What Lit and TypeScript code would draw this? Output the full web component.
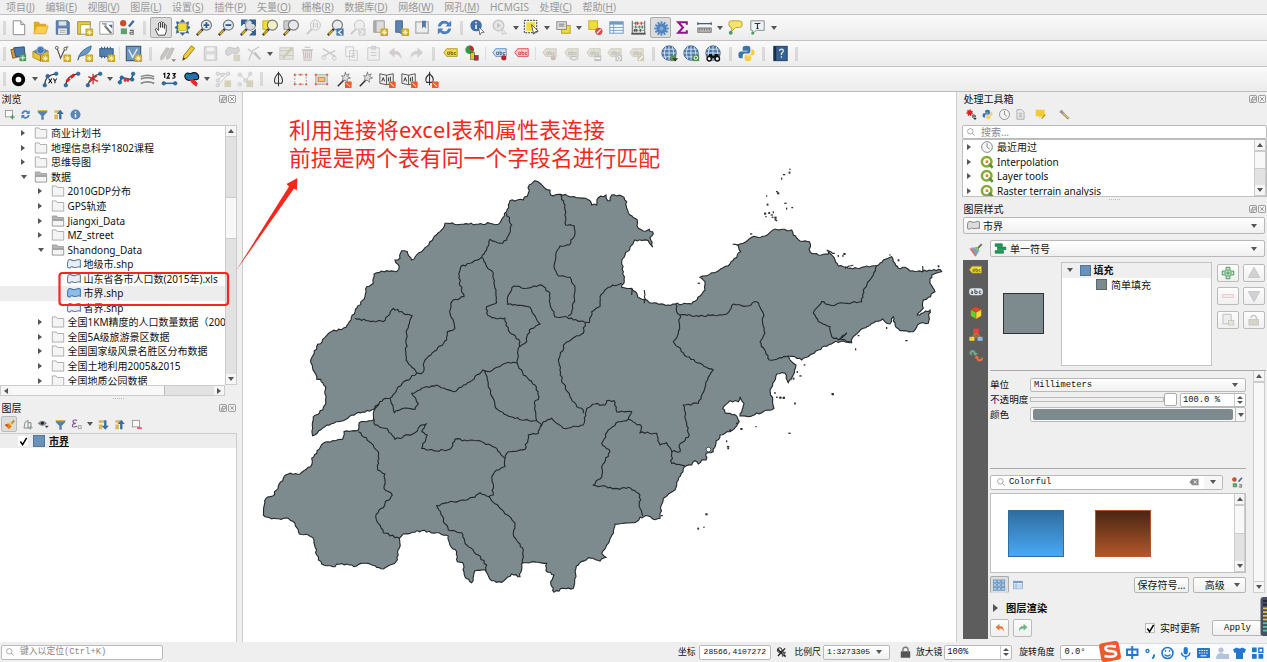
import { LitElement, html, svg, css, nothing } from "lit";
import { customElement, property } from "lit/decorators.js";
import { classMap } from "lit/directives/class-map.js";

// ---------- shared icon fragments (22x22 grid) ----------
const star = svg`<rect x="12" y="12" width="8" height="8" rx="1" fill="#c9a820"/><path d="M16 13v6M13 16h6M14 14l4 4M18 14l-4 4" stroke="#fff6c0" stroke-width="1"/>`;
const orange = svg`<rect x="12.5" y="13" width="7" height="7" rx="1" fill="#f05a28"/><path d="M14 15l4 3.500" stroke="#fff" stroke-width="1"/>`;
const lens = (c: string, fill = "#e6eaec") => svg`<path d="M9.500 12.500L3 19" stroke="#333" stroke-width="2.600"/><path d="M8 14L4 18" stroke="#e3b81c" stroke-width="1.600"/><circle cx="13" cy="8.500" r="5.300" fill="${fill}" stroke="${c}" stroke-width="1.200"/>`;
const greyLens = svg`<path d="M9.500 12.500L4 18" stroke="#c8c8c8" stroke-width="2"/><circle cx="13" cy="8.500" r="5.300" fill="#eee" stroke="#c4c4c4"/>`;
const dots = (pts: number[][], c = "#2b6fa8") => pts.map(([x, y]) => svg`<circle cx=${x} cy=${y} r="1.900" fill=${c} stroke=${c === "#ddd" ? "#bbb" : "#174a78"} stroke-width=".5"/>`);
const tag = (fill: string, line: string, txt: string) => svg`<path d="M4 10l3-4h11v8H7z" fill=${fill} stroke=${line} stroke-width=".9"/><path d="M8 12v-2.500h2V12zM11.500 8v4h2v-2h-2M16.800 10h-1.800v2h1.800" fill="none" stroke=${txt} stroke-width=".7"/>`;
const globe = svg`<circle cx="10.500" cy="10.500" r="7.500" fill="#4a7aae" stroke="#3a5f8a"/><path d="M3 10.500h15M4.500 6.500h12M4.500 14.500h12M10.500 3v15M7 4q-3 6.500 0 13M14 4q3 6.500 0 13" stroke="#d5e3f0" fill="none" stroke-width="1"/>`;
const wand = svg`<path d="M5 18l7-7" stroke="#333" stroke-width="1.600"/><path d="M13 3l.8 3.400L17 5l-1.600 3 3 1.400-3.400 1L15 14l-2.500-2.500-3 .8 1.200-2.800L9 7l3 .3z" fill="#ddd" stroke="#666" stroke-width=".7"/>`;
const bookA = svg`<path d="M3 5l7 1.500L17 5v10l-7 1.500L3 15zM10 6.500v10" fill="#eee" stroke="#444" stroke-width=".9"/><path d="M5 13l1.500-4L8 13M12 9v4M14 8v5" stroke="#333" fill="none"/>`;
const redo = (c: string) => svg`<path d="M5 16q-1-8 7-8V4.500l6 5.500-6 5.500V12q-5-.5-7 4z" fill=${c}/>`;
const undo = (c: string) => svg`<path d="M17 17q1-9-7-9V4.500L4 10l6 5.500V12q5-.5 7 5z" fill=${c}/>`;
const refresh = svg`<path d="M4 10q1-6 7-6 3 0 4.500 2L18 4v6h-6l2-2q-5-3-7 2zM18 12q-1 6-7 6-3 0-4.500-2L4 18v-6h6l-2 2q5 3 7-2z" fill="#4b80bd"/>`;
const cubes = svg`<path d="M11 2l7.500 4v9L11 19.500 3.500 15V6z" fill="#e8432e"/><path d="M3.500 6L11 10v9.500L3.500 15z" fill="#5fd032"/><path d="M18.500 6L11 10v9.500l7.500-4.500z" fill="#f2dc3a"/><path d="M11 2l7.500 4v9L11 19.500 3.500 15V6zM3.500 6L11 10l7.500-4M11 10v9.500" stroke="#7a3b16" stroke-width=".6" fill="none"/>`;
const python = svg`<path d="M11 3q-4 0-4 2.500V8h5v1H5q-2.500 0-2.500 3.500T5 16h2v-3q0-2 2-2h4q2 0 2-2V5.500Q15 3 11 3z" fill="#3b75a8"/><path d="M12 19q4 0 4-2.500V14h-5v-1h6q2.500 0 2.500-3T17 6.500h-1V10q0 2-2 2h-3q-2 0-2 2v2.500Q9 19 12 19z" fill="#f6cf45"/>`;
const swatch = svg`<circle cx="6.500" cy="6.500" r="3.300" fill="#c3502c"/><rect x="4" y="12" width="6.500" height="6" fill="#62a06c"/><path d="M12.500 10L17.500 4" stroke="#3b6ca5" stroke-width="2.400"/><path d="M13.500 14h3.500v4h-3q-1-1.500 0-2h3" fill="none" stroke="#666" stroke-width="1.100"/>`;
const tb = (c: string) => svg`<rect x="4" y="5" width="14" height="12" fill="#f4f7fa" stroke=${c}/><path d="M4 6.500h14" stroke=${c} stroke-width="3"/><path d="M4 11h14M4 14h14M8 8v9" stroke=${c} stroke-width=".9"/>`;

const ICONS: Record<string, unknown> = {
  new: svg`<path d="M5.500 4h8l4 4v10.500h-12z" fill="#fff" stroke="#888"/><path d="M13.500 4v4h4" fill="#ddd" stroke="#888"/>`,
  open: svg`<path d="M4 17V5h5l1.500 2H17v3" fill="#e0aa28"/><path d="M4 17.500l3-8h12l-2.500 8z" fill="#f8cf50" stroke="#d9a420" stroke-width=".8"/>`,
  save: svg`<path d="M4.500 4h12l1.500 1.500V18h-13.500z" fill="#5d83b0" stroke="#4b6c94"/><rect x="7" y="4.500" width="8" height="4.500" fill="#dfe3e8"/><rect x="6.500" y="12" width="9" height="6" fill="#ececec"/><path d="M8 14h6M8 16h6" stroke="#888" stroke-width=".7"/>`,
  layout: svg`<path d="M4 5h13v13H4z" fill="#fff" stroke="#888"/><path d="M4 5h13v3H7v10H4z" fill="#ecc945" stroke="#a88b1d" stroke-width=".7"/>${star}`,
  manager: svg`<path d="M4 5h14v13H4z" fill="#fff" stroke="#999"/><path d="M9 9l7 8" stroke="#777" stroke-width="2.200"/><path d="M6.500 7l4 .3-1 3.200" fill="none" stroke="#999" stroke-width="1.500"/><path d="M13 8h4v4" fill="#3f6aa0"/>`,
  swatch,
  hand: svg`<path d="M7.500 18L4.800 12.500q-.5-1.500 1-1.500L8 13V5.500q1-1.500 2 0V10 4.500q1-1.500 2 0V10 5.500q1-1.500 2 0V11 7.500q1-1 2 0V14l-1.500 4z" fill="#fff" stroke="#333" stroke-width=".9"/>`,
  pan: svg`<rect x="6" y="7" width="9" height="7" fill="#f2dc3c" stroke="#bfa51e" stroke-width=".7"/><path d="M11 2.500l2.500 3h-5zM11 19.500l2.500-3h-5zM3 11l3-2.500v5zM19 11l-3-2.500v5zM4.500 5l3.500.5L5.500 8zM17.500 5L17 8.500 14.500 6zM4.500 17L5 13.500 7.500 16zM17.500 17l-3.500-.5 2.500-2.500z" fill="#3b6598" stroke="#3b6598" stroke-width=".6"/>`,
  zin: svg`${lens("#777")}<path d="M13 5.500v6M10 8.500h6" stroke="#2e5f97" stroke-width="2"/>`,
  zout: svg`${lens("#777")}<path d="M10 8.500h6" stroke="#2e5f97" stroke-width="2"/>`,
  zfull: svg`${lens("#999", "#d5dbe0")}<path d="M4 3.500h4.500L4 8zM18 3.500v4.500L13.500 3.500zM18 18.500h-4.500L18 14zM4 3.500l3.500 3.500M18 3.500l-3.500 3.500M18 18.500l-3.500-3.500" fill="#2e5f97" stroke="#2e5f97" stroke-width="1.600"/>`,
  zsel: svg`<path d="M3 4h9v9H3z" fill="#f0dd3a" stroke="#c7ae24"/>${lens("#777", "#f3efc8")}`,
  zlay: svg`<path d="M3 4h9v9H3z" fill="#ccc" stroke="#999"/>${lens("#777")}`,
  znat: svg`${greyLens}<path d="M11 6v5M15 6v5M13 7v.8M13 9.500v.8" stroke="#bbb"/>`,
  zlast: svg`${lens("#777")}<rect x="12" y="12" width="7.500" height="7.500" fill="#4477ae"/><path d="M17.500 13.500L14 16l3.500 2.500" stroke="#fff" fill="none" stroke-width="1.200"/>`,
  znext: svg`${greyLens}<rect x="12" y="12" width="7.500" height="7.500" fill="#d4d4d4"/><path d="M14 13.500l3.500 2.500-3.500 2.500" stroke="#fff" fill="none"/>`,
  newmap: svg`<path d="M5 4h11v12H5z" fill="#ddd" stroke="#999"/><path d="M5 4h3v12H5z" fill="#aaa"/>${star}`,
  newbook: svg`<path d="M6 4h7v14l-3.500-2L6 16z" fill="#5d83b0" stroke="#45678f"/>${star}`,
  book: svg`<path d="M4 5h13v12H4z" fill="#eee" stroke="#aaa" stroke-width="1.300"/><path d="M10.500 4h4v8l-2-2-2 2z" fill="#5079a8"/>`,
  refresh,
  info: svg`<circle cx="9.500" cy="9" r="6" fill="#3f6fa8"/><path d="M9.500 8v4.500M9.500 5v1.500" stroke="#fff" stroke-width="1.600"/><path d="M12 10l6 6-2.800.2-1.600 2.600z" fill="#fff" stroke="#444" stroke-width=".8"/>`,
  action: svg`<circle cx="10" cy="9" r="5.500" fill="#e8e8e8" stroke="#c8c8c8" stroke-width="1.600"/><path d="M8.500 6l4 3-4 3z" fill="#c4c4c4"/><path d="M13 12l5 5-4 1z" fill="#eee" stroke="#bbb" stroke-width=".8"/>`,
  select: svg`<path d="M3.500 3.500h13v13h-13z" fill="none" stroke="#333" stroke-dasharray="2 1"/><rect x="5.500" y="5.500" width="9" height="9" fill="#f0dd3a"/><path d="M11 8l7 7-3 .2-1.700 2.800z" fill="#fff" stroke="#333" stroke-width=".8"/>`,
  selval: svg`<rect x="9" y="9" width="9" height="8" fill="#f0dd3a" stroke="#b59e1e"/><rect x="4" y="5" width="10" height="8" fill="#e4e4e4" stroke="#888"/><path d="M6 7.500h6M6 9.500h6" stroke="#777"/>`,
  desel: svg`<rect x="4" y="4" width="9" height="9" fill="#f2dc3c" stroke="#c7ae24"/><circle cx="14.500" cy="15" r="3.800" fill="#d94a4a"/><path d="M12.500 17l4-4" stroke="#fff" stroke-width="1.300"/>`,
  table: tb("#6f9bc9"),
  abacus: svg`<path d="M4.500 4v13M17.500 4v13" stroke="#666" stroke-width="1.100"/><path d="M3.500 17.500h15" stroke="#555" stroke-width="2"/><path d="M5 6.500h12M5 10.500h12M5 14h12" stroke="#888" stroke-width=".8"/><path d="M8 5v3M10 5v3M14 5v3" stroke="#d44" stroke-width="1.600"/><path d="M8 9v3M12 9v3M15 9v3" stroke="#4a9b5c" stroke-width="1.600"/><path d="M7 12.500v3M9 12.500v3M13 12.500v3" stroke="#555" stroke-width="1.600"/>`,
  gear: svg`<circle cx="11" cy="11" r="5" fill="#4f86c2"/>${[0, 30, 60, 90, 120, 150].map((a) => svg`<path d="M11 3.500v15" stroke="#4f86c2" stroke-width="2" transform="rotate(${a} 11 11)"/>`)}<circle cx="11" cy="11" r="2" fill="#86add6"/>`,
  sigma: svg`<path d="M15.500 8V5.500H6.500l5 5.500-5 5.500h9V14" fill="none" stroke="#930f8e" stroke-width="2.100"/>`,
  measure: svg`<path d="M4 7h14M4 5.500v3M18 5.500v3" stroke="#3d5f86" stroke-width="1.300"/><rect x="4" y="11.500" width="14" height="4.500" fill="#bbb" stroke="#777"/><path d="M6 12v2M8.500 12v2M11 12v2M13.500 12v2M16 12v2" stroke="#555" stroke-width=".8"/>`,
  tip: svg`<path d="M6 4h9q3 0 3 3.500T15 11h-4l-4 4v-4q-3 0-3-3.500T6 4z" fill="#f6e472" stroke="#b7a12b"/><circle cx="6" cy="16.500" r="2" fill="#4f9a5e"/>`,
  textann: svg`<path d="M4 4h14v10h-8l-4 3v-3H4z" fill="#eef3f5" stroke="#7d8d95"/><path d="M8 6.800h6M11 7v5M9.800 12h2.400" stroke="#333" stroke-width="1.200"/><circle cx="6" cy="17" r="1.500" fill="#4f9a5e"/>`,
  ds: svg`<path d="M3 7l8-2 2 9-8 2z" fill="#d49a3a" stroke="#8f6418"/><path d="M6 5l11-1 1 10H8z" fill="#4a78ae" stroke="#2d527e"/><rect x="12" y="12" width="7" height="7" fill="#4f9a5e"/><path d="M15.500 13v5M13 15.500h5" stroke="#fff"/>`,
  gpkg: svg`<path d="M3 9l8-5 8 4-8 5z" fill="#5280b3"/><path d="M3 9l8 4v6l-8-4zM11 13l8-5v6l-8 5z" fill="#e9c534" stroke="#8f7410" stroke-width=".7"/><circle cx="11" cy="7.500" r="4" fill="#4a7ab0" stroke="#cfe0ef" stroke-width=".7"/>${star}`,
  vec: svg`<path d="M5 5l4 11L14 5l3-1" stroke="#555" fill="none" stroke-width="1.200"/><circle cx="5" cy="5" r="1.500" fill="#fff" stroke="#555"/><circle cx="14" cy="6" r="1.500" fill="#fff" stroke="#555"/>${star}`,
  feather: svg`<path d="M4 18Q5 8 18 3q0 7-8 10l-4 1z" fill="#6a97c4" stroke="#3a6591" stroke-width=".9"/>${star}`,
  chip: svg`<path d="M6 4v12M9 4v12M12 4v12M15 4v12" stroke="#405f85" stroke-width="1.200"/><rect x="4" y="6" width="14" height="8" fill="#5280b3" stroke="#35587f"/>${star}`,
  virt: svg`<rect x="3.500" y="3.500" width="15" height="15" fill="#6f97c2" stroke="#37597f" stroke-width="1.200"/><path d="M6 7l4 8 5-9" stroke="#e9f0f7" fill="none" stroke-width="1.400"/>${star}`,
  edits: svg`<path d="M4 14l6-9 3 1-6 10-3 2zM10 14l5-9 3 1-5 10-3 1z" fill="#c9c5c2" stroke="#b5b2b0" stroke-width=".8"/><path d="M15 17h5l-2.500 3z" fill="#888"/>`,
  pencil: svg`<path d="M5 18l1-5 8-10 3.500 2.500-8 10z" fill="#ecc83a" stroke="#8a7417" stroke-width=".9"/><path d="M5 18l.7-3 2 1.500z" fill="#333"/>`,
  gsave: svg`<path d="M4.500 4h13v14h-13z" fill="#d9d9d9" stroke="#c6c6c6"/><rect x="7" y="4.500" width="8" height="4" fill="#f3f3f3"/><rect x="7" y="12" width="8" height="5" fill="#f3f3f3"/>`,
  gpoly: svg`<path d="M4 8q2-5 6-3t7-1q3 6-2 7-4-2-8 2-4 0-3-5z" fill="#d6d6d6" stroke="#c4c4c4"/><rect x="12" y="12" width="7" height="7" fill="#d6d2bc"/>`,
  gvert: svg`<path d="M5 18L9 8l7-4M4 6l12 10" stroke="#c8c8c8" fill="none" stroke-width="1.300"/><path d="M11 10l6 7" stroke="#c2c2c2" stroke-width="2.300"/>`,
  gmulti: svg`<rect x="4" y="5" width="14" height="12" fill="#e5e3dd" stroke="#cacaca"/><path d="M4 8h14M4 13h14" stroke="#c6c6c6"/><path d="M7 16L17 5" stroke="#d0caaf" stroke-width="2.500"/>`,
  gdel: svg`<path d="M5 7h12M8 4.500h6M6.500 8l1 10h7l1-10zM9 10v6M11 10v6M13 10v6" fill="#e9e2e2" stroke="#c8bfbf" stroke-width="1.100"/>`,
  gcut: svg`<path d="M4 6l13 8M4 14l13-6" stroke="#cacaca" stroke-width="1.500"/><circle cx="16" cy="16" r="2" fill="none" stroke="#cacaca"/><circle cx="5" cy="15" r="2" fill="none" stroke="#cacaca"/>`,
  gcopy: svg`<path d="M5 4h8v10H5zM9 8h8v10H9z" fill="#f6f6f6" stroke="#cacaca"/><path d="M11 11h4M11 13h4M11 15h4" stroke="#ccc"/>`,
  gpaste: svg`<path d="M5 5h12v13H5z" fill="#f0f0f0" stroke="#cacaca"/><path d="M9 3.500h4v3H9zM8 10h6M8 13h6" stroke="#cacaca" fill="#ddd"/>`,
  gundo: undo("#d3cdcd"), gredo: redo("#cfd3cf"),
  tagy: tag("#f5de43", "#a8901b", "#5a4a00"),
  diag: svg`<circle cx="8" cy="7" r="4.500" fill="#2e9b45"/><path d="M8 7V2.500a4.500 4.500 0 014 6z" fill="#d32222"/><rect x="9" y="10" width="4" height="7" fill="#e8c51d" stroke="#333" stroke-width=".5"/><rect x="13" y="13" width="4" height="5" fill="#d32222" stroke="#333" stroke-width=".5"/>`,
  tagb: svg`${tag("#cfe0f2", "#4f86c2", "#2c4d73")}<circle cx="15.500" cy="15.500" r="2.700" fill="#b5202c"/>`,
  tagr: tag("#fbd3d3", "#e03a3a", "#d02020"),
  g1: svg`${tag("#e2e0d4", "#ccc9bb", "#b5b5b5")}<circle cx="15" cy="15.500" r="2.700" fill="#d0bcbc"/>`,
  g2: svg`${tag("#e2e0d4", "#ccc9bb", "#b5b5b5")}<path d="M9 16q5-4 9 0-4 3.500-9 0z" fill="#eee" stroke="#b5b5b5"/>`,
  g3: svg`${tag("#e2e0d4", "#ccc9bb", "#b5b5b5")}<rect x="12" y="13" width="7" height="6" fill="#c2c2c2"/><path d="M13 16h5" stroke="#fff" stroke-width="1.500"/>`,
  g4: svg`${tag("#e2e0d4", "#ccc9bb", "#b5b5b5")}<rect x="12" y="13" width="7" height="6" fill="#c2c2c2"/><circle cx="15.500" cy="16" r="1.800" fill="none" stroke="#fff"/>`,
  g5: svg`${tag("#e2e0d4", "#ccc9bb", "#b5b5b5")}<rect x="12" y="13" width="7" height="6" fill="#d2ccb2"/><path d="M13.500 18l4-4" stroke="#fff" stroke-width="1.300"/>`,
  gl1: svg`${globe}<rect x="12" y="13" width="6" height="6" fill="#5a8f5a"/><path d="M14 16h6l-3 3z" fill="#333"/>`,
  gl2: svg`${globe}<rect x="12" y="12" width="7" height="7" fill="#4f8f55"/><circle cx="15.500" cy="15.500" r="1.800" fill="none" stroke="#fff"/>`,
  gl3: svg`${globe}<path d="M4.500 16l2-4.500h3v1.500h3v-1.500h3l2 4.500z" fill="#111"/><circle cx="6.500" cy="16.500" r="2.300" fill="#fff" stroke="#111" stroke-width="1.500"/><circle cx="15" cy="16.500" r="2.300" fill="#fff" stroke="#111" stroke-width="1.500"/>`,
  python,
  help: svg`<rect x="4" y="3.500" width="14" height="15" fill="#34618f" stroke="#1f3d5e"/><path d="M4 3.500h2.500v15H4z" fill="#1c2f44"/><path d="M10 8.500q0-2 2-2t2 1.700q0 1.300-2 2.800v1.500M12 14v1.500" stroke="#e8f0f8" fill="none" stroke-width="1.300"/>`,
  ring: svg`<circle cx="11" cy="11" r="5" fill="#fff" stroke="#000" stroke-width="4"/>`,
  xy: svg`<path d="M5 17Q5 6 17 5" fill="none" stroke="#444" stroke-width="1.300"/>${dots([[5, 17], [8, 7.500], [17, 5]])}<path d="M9 10l3.500 5M12.500 10L9 15M14 10l1.700 2.500L17.500 10M15.700 12.500V15" stroke="#111" stroke-width="1.100"/>`,
  curve: svg`<path d="M4 17Q5 6 17 5" fill="none" stroke="#444" stroke-width="1.300"/>${dots([[4, 17], [17, 5]])}<path d="M4.800 13L8 10M9 9l4-3" stroke="#e02020" stroke-width="3"/>`,
  split: svg`<path d="M4 17Q6 8 17 5" fill="none" stroke="#444" stroke-width="1.300"/>${dots([[4, 17], [17, 5]])}<path d="M9.500 5v11M4.500 8l10 5M5.500 14l8-7" stroke="#c22" stroke-width="1.300"/>`,
  reshape: svg`<path d="M4 14l2-5 10 2 2-6" fill="none" stroke="#2b6fa8" stroke-width="1.800"/>${dots([[4, 14], [6, 9], [18, 5], [17, 11]])}<path d="M8 11.500h6M9.500 9.500v4M12.500 9.500v4" stroke="#e02020" stroke-width="1.400"/>`,
  stream: svg`<path d="M4 8q7-3 14 0M4 10.500q7-3 14 0" stroke="#888" fill="none" stroke-width="1.700"/><path d="M4 15q7-3 14 0" stroke="#888" fill="none" stroke-width="2"/>`,
  n123: svg`<path d="M4.500 5.500l1.500-1v5M8.500 5q2.500-1 2.500.5L8.500 9.500H11.500M14 4.800h3L15.500 7q2 .5 1 2-1 1-2.500.3" stroke="#111" fill="none" stroke-width="1.300"/><path d="M5 15h12" stroke="#2b6fa8" stroke-width="1.600"/>${dots([[5, 15], [17, 15]])}`,
  blob: svg`<path d="M4 7q1-4 6-2 5-3 8 1 2 6-3 5-3 0-5 1-6 0-6-5z" fill="#1f73b5" stroke="#111" stroke-width="1.200"/><path d="M9 11l4 0 4 4-1 3-4-3z" fill="#e8262a" stroke="#e8262a"/>`,
  gt1: svg`<path d="M5 5l12 0M5 12l6-7 M5 18l10-12" stroke="#ccc"/>${dots([[5, 5], [10, 6], [16, 5], [5, 12], [5, 17]], "#ddd")}<rect x="12" y="12" width="7" height="7" fill="#d5d0b8"/>`,
  gt2: svg`<path d="M5 6l7 6 4-7" stroke="#ccc" fill="none"/>${dots([[5, 6], [16, 5], [11, 12], [5, 16]], "#ddd")}<rect x="12" y="12" width="7" height="7" fill="#d5d0b8"/>`,
  pen: svg`<path d="M11 3v15M11 4q-6 6-3.500 11h7Q17 10 11 4z" fill="none" stroke="#333" stroke-width="1.100"/>`,
  rect: svg`<path d="M5 6h12v10H5z" fill="#f7f7f7" stroke="#888" stroke-dasharray="2 1.500" stroke-width=".8"/>${[[5, 6], [17, 6], [5, 16], [17, 16], [11, 6], [11, 16]].map(([x, y]) => svg`<rect x=${x - 1} y=${y - 1} width="2" height="2" fill="#ef5a2a"/>`)}`,
  rect2: svg`<path d="M5 6h12v10H5z" fill="#ddd" stroke="#aaa"/><path d="M7.500 9h7v4h-7z" fill="#f6c27b" stroke="#ef7a3a"/>${[[5, 6], [17, 6], [5, 16], [17, 16]].map(([x, y]) => svg`<rect x=${x - 1} y=${y - 1} width="2" height="2" fill="#ef5a2a"/>`)}`,
  wando: svg`${wand}${orange}`, wand,
  ba: svg`${bookA}${orange}`,
  peno: svg`<path d="M10 3v14M10 5q-6 5-3 9h6q3-4-3-9z" fill="none" stroke="#333" stroke-width="1.100"/>${orange}`,
  // dock panel icons
  addl: svg`<rect x="4" y="4" width="12" height="11" fill="#fafafa" stroke="#888" stroke-width="1.300"/><path d="M16 12v7M12.500 15.500h7" stroke="#3f9b57" stroke-width="2.400"/>`,
  funnel: svg`<path d="M3 4h16v3l-6 6v7H9v-7L3 7z" fill="#5580b0"/><path d="M3 3.500h16v2H3z" fill="#d2bd45"/>`,
  collapse: svg`<path d="M4 4h9v4H4zM4 11h6v8H4z" fill="#ddb45a"/><path d="M14 3l6 7h-4v9h-4v-9H8z" fill="#3d6da5"/>`,
  expand: svg`<path d="M3 4h9v4H3zM3 11h6v8H3z" fill="#ddb45a"/><path d="M14 20l6-7h-4V4h-4v9H8z" fill="#3d6da5"/>`,
  infoc: svg`<circle cx="11" cy="11" r="8.500" fill="#5a87b8"/><path d="M11 10v6M11 6v2" stroke="#fff" stroke-width="2.400"/>`,
  brush: svg`<path d="M13 11l6-7" stroke="#b98a2d" stroke-width="3"/><path d="M3 12l6-3 6 5-5 5z" fill="#e87d1e"/><path d="M3 12l4-2 1 5z" fill="#cc3a3a"/><path d="M9 9l5 4 2-3-4-3z" fill="#f3cd3f"/>`,
  brush2: svg`<path d="M12 10l7-7" stroke="#5f7a5c" stroke-width="2.600"/><path d="M2 9l6-2 7 6-5 7z" fill="#c7a6d3"/><path d="M2 9l5 1 5 9-2 1z" fill="#d9745b"/><path d="M5 8l6 1 3 5-2 4z" fill="#6fa5cf"/><path d="M9 7l4 0 3 5-2 2z" fill="#8cbb6a"/>`,
  addgrp: svg`<path d="M5 17l2-10 5-3v13M12 8h5v9H5" fill="#eee" stroke="#777" stroke-width="1.400"/><path d="M16 13v7M12.500 16.500h7" stroke="#7fae8a" stroke-width="2"/>`,
  eye: svg`<path d="M2 9q7-7 14 0-7 7-14 0z" fill="#7f95a8" stroke="#555"/><circle cx="9" cy="9" r="2.500" fill="#222"/><path d="M13 13h7l-3.500 4z" fill="#444"/>`,
  eps: svg`<path d="M12 4q-7-2-7 2Q5 9 10 9q-6 0-6 4T12 14" fill="none" stroke="#7b5a8e" stroke-width="1.900"/><path d="M14 13v5h5v-5z" fill="none" stroke="#888" stroke-width="1.300"/>`,
  rem: svg`<rect x="4" y="4" width="12" height="11" fill="#fafafa" stroke="#888" stroke-width="1.300"/><path d="M12 17h8" stroke="#e33" stroke-width="2.400"/>`,
  gears: svg`<circle cx="8" cy="8" r="4" fill="#d22" stroke="#d22" stroke-width="3" stroke-dasharray="2 1.300"/><circle cx="15" cy="14" r="2.500" fill="#777" stroke="#777" stroke-width="2.500" stroke-dasharray="1.500 1"/><path d="M14 17h6l-3 3.500z" fill="#333"/>`,
  clock: svg`<circle cx="11" cy="11" r="8.500" fill="#f5f5f5" stroke="#888" stroke-width="1.500"/><path d="M11 5v6l4 3" stroke="#888" fill="none" stroke-width="1.500"/>`,
  doc: svg`<path d="M5 3h8l4 4v12H5z" fill="#eee" stroke="#999" stroke-width="1.300"/><path d="M8 9h6M8 12h6M8 15h6" stroke="#999" stroke-width="1.300"/>`,
  note: svg`<path d="M3 3h15v11h-6l-3 4v-4H3z" fill="#f2cc2f"/><path d="M13 18l6-7" stroke="#c99a1c" stroke-width="2.500"/>`,
  wrench: svg`<path d="M7 8l11 10" stroke="#777" stroke-width="4"/><path d="M8.500 9L18 17.500" stroke="#e9c86a" stroke-width="2.400"/><path d="M3 5l4-2 3 5-2 2-5-2z" fill="#999"/>`,
  q: svg`<circle cx="10.500" cy="10.500" r="7.500" fill="#fff" stroke="#84ac33" stroke-width="4"/><path d="M14 14l6 6" stroke="#589632" stroke-width="4"/><rect x="9" y="8.500" width="4" height="4" fill="#ee7913"/>`,
  folder: svg`<path d="M2 3h6l2 2.500h10V19H2z" fill="#f4f4f4" stroke="#999" stroke-width="1.200"/>`,
  folder2: svg`<path d="M2 3h7l2 2.500h9V9H2z" fill="#b5b5b5" stroke="#888"/><path d="M2 10h18v9H2z" fill="#f4f4f4" stroke="#888" stroke-width="1.300"/>`,
  shp: svg`<path d="M1 16Q0 3 5 4q6 3 9 1 5-2 7 0v11q-3-1-6 0-5 1-7-1-2 0-3 2-2 1-4-1z" fill="#e8eef4" stroke="#5b7a99" stroke-width="1.600"/>`,
  shpb: svg`<path d="M1 16Q0 3 5 4q6 3 9 1 5-2 7 0v11q-3-1-6 0-5 1-7-1-2 0-3 2-2 1-4-1z" fill="#8fbce8" stroke="#3d74ab" stroke-width="1.600"/>`,
  shpg: svg`<path d="M1 16Q0 3 5 4q6 3 9 1 5-2 7 0v11q-3-1-6 0-5 1-7-1-2 0-3 2-2 1-4-1z" fill="#ddd" stroke="#777" stroke-width="1.500"/>`,
  single: svg`<path d="M2 3h12v4.500H2zM6 8.500h14V13H6zM2 14.500h14V19H2z" fill="#1c9a57" stroke="#12713e"/>`,
  search: svg`<circle cx="9.500" cy="9.500" r="6" fill="none" stroke="#888" stroke-width="1.500"/><path d="M14 14l5 5" stroke="#888" stroke-width="1.800"/>`,
  abc: svg`<rect x="1.500" y="6" width="19" height="9.500" rx="4.500" fill="#dfe3ee"/><path d="M4.500 9.500q2.500-.5 2 3.500-3 .8-2-1.500h2M9.500 7v6h3v-3h-3M18 9.800h-2.500v3.200H18" stroke="#444" fill="none" stroke-width="1.200"/>`,
  cubes,
  tree: svg`<path d="M11 6L6 15M11 6v9M11 6l6 9" stroke="#c07a2c" stroke-width="2"/><rect x="7" y="2" width="8" height="6.500" rx="1" fill="#d44"/><rect x="2" y="13.500" width="7" height="5.500" fill="#f2d13a"/><rect x="13" y="13.500" width="7" height="5.500" fill="#8cb8e4"/>`,
  hist: svg`<path d="M2 5q6-5 9 2h2.500l-3.500 4L6.500 7H9Q7 5 5 6.500q-1 2 1 4-4-.5-4-5.500z" fill="#6fae8a"/><path d="M20 17q-6 4-9-3H8.500l3.500-4 3.500 4h-2q2 3 5 .5 1-2 0-3 3 2 1.500 5.500z" fill="#e8743b"/>`,
  undoo: undo("#ea7b3c"), redog: redo("#73b38c"),
  plus: svg`<path d="M8 2h6v6h6v6h-6v6H8v-6H2V8h6z" fill="#dff0df" stroke="#3f9155" stroke-width="1.500"/><path d="M11 4.500v13M4.500 11h13" stroke="#3f9155" stroke-width="1.500"/>`,
  minus: svg`<rect x="2" y="9" width="18" height="4.500" fill="#f7eaea" stroke="#d6bcbc"/>`,
  up: svg`<path d="M11 2l9 16H2z" fill="#d0d2d6" stroke="#b7b7bb"/>`,
  down: svg`<path d="M11 20L2 4h18z" fill="#d0d2d6" stroke="#b7b7bb"/>`,
  dup: svg`<path d="M3 2h13v15H3z" fill="#eee" stroke="#bbb" stroke-width="1.400"/><rect x="12" y="12" width="8" height="7" fill="#e7e4d5" stroke="#bbb"/>`,
  unlock: svg`<rect x="3" y="10" width="15" height="9" fill="#d6d4c8" stroke="#bbb"/><path d="M6 8q1-5 6-4 3 1 3 6" fill="none" stroke="#c4c4c4" stroke-width="2"/>`,
  lock: svg`<rect x="3" y="9" width="16" height="11" rx="1" fill="#555"/><path d="M6.500 9q-.5-7 4.500-7t4.500 7" fill="none" stroke="#777" stroke-width="2.400"/>`,
  grid: svg`${[2, 8.5, 15].map((x) => [3, 9, 15].map((y) => svg`<rect x=${x} y=${y} width="5" height="4.500" fill="#a9c8e6" stroke="#5587b9"/>`))}`,
  clear: svg`<path d="M7 4h14v14H7l-6-7z" fill="#888"/><path d="M10 7.500l7 7M17 7.500l-7 7" stroke="#fff" stroke-width="1.800"/>`,
  extent: svg`<path d="M4 5l14 13M5 17L17 4" stroke="#222" stroke-width="2.400"/><circle cx="8" cy="7" r="4" fill="none" stroke="#222" stroke-width="1.600"/><path d="M11 9l7 2-5 7z" fill="#777" stroke="#222"/>`,
};

@customElement("q-icon")
class QIcon extends LitElement {
  @property() name = "";
  static styles = css`:host{display:block;flex:none;width:22px;height:22px}svg{display:block;width:100%;height:100%}`;
  render() { return html`<svg viewBox="0 0 22 22" fill="none">${ICONS[this.name] ?? nothing}</svg>`; }
}

// ---------- map geometry: thirds of a pixel, relative to a sheet origin ----------
type Pt = [number, number];
const SHEETS: Record<string, Pt> = { A: [240, 170], B: [240, 400], D: [580, 160], E: [540, 380] };
const noise = (x: number, y: number) => { const s = Math.sin(x * 12.9898 + y * 78.233) * 43758.5453; return s - Math.floor(s) - 0.5; };
function points(src: string): Pt[] {
  let o = SHEETS.A;
  const out: Pt[] = [];
  for (const t of src.trim().split(/\s+/)) {
    if (SHEETS[t]) { o = SHEETS[t]; continue; }
    const [x, y] = t.split(",").map(Number);
    out.push([o[0] + x / 3 - 243, o[1] + y / 3 - 92]);
  }
  return out;
}
function ragged(src: string, amp = 2): string {
  const p = points(src);
  let d = `M${p[0][0].toFixed(1)} ${p[0][1].toFixed(1)}`;
  for (let i = 1; i < p.length; i++) {
    const [ax, ay] = p[i - 1], [bx, by] = p[i];
    const len = Math.hypot(bx - ax, by - ay), n = Math.max(1, Math.round(len / 2.4));
    for (let k = 1; k <= n; k++) {
      const t = k / n, j = k === n ? 0 : amp * noise(ax + k * 3.1, by + k * 1.7);
      d += `L${(ax + (bx - ax) * t - ((by - ay) / (len || 1)) * j).toFixed(1)} ${(ay + (by - ay) * t + ((bx - ax) / (len || 1)) * j).toFixed(1)}`;
    }
  }
  return d;
}
const OUTLINE = `A 885,32 900,40 915,55 930,60 932,75 962,73 995,80 1030,84 1050,92 1055,105 D 35,135 50,135 55,113 78,105 83,122 90,122 95,105 125,108 140,125 140,145 150,165 172,180 175,205 190,213 208,208 220,222 210,232 218,262 205,242 165,240 150,262 135,285 125,305 130,335 133,365 125,382 155,385 180,415 215,430 265,435 285,432 335,432 360,408 375,390 375,365 360,352 410,335 450,312 482,275 475,257 458,253 490,250 515,232 555,228 585,207 635,210 640,225 660,243 688,245 690,275 715,285 745,282 742,270 765,300 775,318 805,325 845,322 890,317 910,300 935,290 945,310 955,325 975,322 990,333 1055,332 1075,328 1085,335 1055,345 1050,370 1065,395 1045,412 1030,420 1030,445 1012,465 1050,450 1045,490 1020,490 1000,515 960,512 945,495 940,470 930,492 920,490 908,477 850,505 820,530 815,548 790,543 760,548 715,570 690,585 665,600 645,590 620,588 635,605 648,615 640,645 625,668 615,640 590,642 578,670 570,690 578,720 582,745 E 702,85 670,95 625,110 600,108 612,70 600,50 595,65 570,62 548,85 555,98 590,108 598,125 590,138 570,155 540,165 528,190 520,215 498,220 498,240 485,240 475,252 465,242 455,255 432,262 415,300 405,330 370,355 360,400 360,415 338,417 325,408 300,412 290,425 225,432 220,460 205,490 185,520 198,532 180,543 145,533 118,550 108,565 108,590 100,625 70,625 42,637 32,605 42,585 18,572 20,550 B 895,487 845,490 840,530 815,522 785,547 755,542 735,510 705,512 695,548 675,530 668,488 652,485 650,455 630,435 625,408 590,398 545,392 490,402 478,415 478,445 468,485 450,495 430,507 405,497 370,490 350,498 290,492 285,500 245,492 230,465 222,420 205,405 178,402 165,370 145,355 95,357 70,345 78,295 98,288 130,235 145,222 180,222 212,200 215,175 250,130 308,118 312,95 355,90 358,68 400,60 400,40 415,15 395,30 335,45 310,62 260,75 218,107 220,50 248,30 257,5 A 257,650 242,628 230,628 212,570 230,530 268,488 318,472 345,425 375,380 380,350 400,340 402,312 440,302 470,305 478,290 465,270 480,265 485,242 502,245 515,270 550,240 580,205 600,185 615,160 665,163 750,160 775,163 800,125 810,92 850,90 865,70 868,45 885,32`;
const BORDERS = [
  "A 962,75 975,105 977,165 1003,168 1005,190 988,225 960,228 947,255 942,290 955,318 990,322 1005,350 1003,385 995,430 985,438",
  "A 800,130 815,165 800,210 780,220 750,208 740,240 725,262 690,280 662,290 657,325 672,380 635,395 630,430 645,475 622,485 620,510 590,540 555,570 548,608 530,610 475,650 450,685 430,688 405,710",
  "A 725,262 738,285 760,310 768,360 770,398 740,410 740,430 755,443 795,445 805,480 840,515 835,535 832,580 805,577 750,605 728,600 690,635 640,665 590,645 545,655 515,670 535,700 525,718 490,715 463,728 450,685",
  "A 345,445 385,452 430,455 460,415 490,430 517,438 500,480 498,570 530,610",
  "A 840,530 860,515 868,480 900,462 870,412 803,403 803,380 822,348 860,355 905,345 930,370 930,400 945,440 980,440 1000,450 1048,458 1055,425 1080,410 D 60,410 85,382 125,370",
  "A 1035,458 1030,490 975,520 955,570 965,630 990,680 1010,710 1030,720 E 130,100",
  "A 832,580 850,615 885,645 897,680 883,700 888,745 B 890,62 905,78",
  "A 735,600 745,650 768,715 800,735 845,750 B 890,62",
  "B 900,80 910,65 935,55 970,85 1030,75 E 140,85 165,72 195,75 200,62 222,62 230,95 275,95 265,118 305,140 300,158 350,160 360,195 380,188 395,213 395,250 435,258",
  "B 905,75 895,100 865,105 855,148 805,155 795,175 795,200 770,210 755,230 760,285 747,290 720,278 705,292 640,305 590,317 625,390 665,398 680,435 715,465 740,495 738,512",
  "B 795,175 770,145 725,125 645,118 630,148 590,153 545,145 562,105 545,95 558,72 540,78 525,98 465,118 440,85 405,75 400,55",
  "B 355,95 400,135 415,155 413,210 435,222 432,265 457,285 435,310 407,350 430,398 478,415",
  "B 747,290 825,370 820,405 850,450 848,490",
  "E 265,118 235,125 205,150 185,190 210,215 185,260 185,290 160,315 240,328 265,322 300,345 298,380 308,408",
  "E 503,0 475,70 430,75 440,130 448,165 418,195 420,215 395,215",
  "D 287,432 290,455 300,465 370,468 440,462 460,432 500,438 530,425 550,460 548,490 555,520 540,545 568,600 620,590",
  "D 300,465 295,520 280,545 320,590 380,622 400,630 383,660",
  "D 890,317 880,345 850,390 845,425 750,435 725,425 700,460 715,485 750,500 755,530 775,540 800,518 780,535 815,548",
  "D 193,390 193,430", "D 155,385 155,405", "D 1028,318 1028,335", "D 740,270 765,280", "D 795,325 820,316",
];
const ISLETS = "D 630,28 628,37 611,44 605,55 590,95 593,99 560,108 562,133 615,130 620,145 636,143 554,160 558,170 567,158 574,165 580,156 577,172 585,172 590,182 586,178 512,222 775,287 788,288 792,281 930,285 955,300 978,542 827,567 673,615 757,702 645,730 640,655 660,648 652,635 590,712 600,712 612,712 1075,318 355,370 920,503 835,527 E 498,402 492,442 474,445 747,160 765,70 877,41 603,146 648,140 564,204 563,200 705,38 720,53 730,53 743,5 570,150 590,130 560,183 365,407";

// ---------- toolbars: "|" grip, "/" separator, "v" drop-down arrow, "*" pressed ----------
const BARS = [
  "| new open save layout manager swatch | *hand pan zin zout zfull zsel zlay znat zlast znext newmap newbook book refresh | info action v select v selval v desel table abacus *gear sigma measure v tip textann v",
  "| ds gpkg vec feather chip / virt | edits pencil gsave gpoly gvert v gmulti gdel gcut gcopy gpaste gundo gredo | tagy diag / tagb tagr / g1 g2 g3 g4 g5 | gl1 gl2 gl3 | python | help |",
  "| ring v xy curve split v reshape stream n123 blob v gt1 gt2 | pen rect rect2 wando wand ba ba peno",
];
const MENU = ["项目(J)", "编辑(E)", "视图(V)", "图层(L)", "设置(S)", "插件(P)", "矢量(O)", "栅格(R)", "数据库(D)", "网络(W)", "网孔(M)", "HCMGIS", "处理(C)", "帮助(H)"];
// depth, arrow state, icon, label
const TREE: [number, string, string, string][] = [
  [0, "r", "folder", "商业计划书"], [0, "r", "folder", "地理信息科学1802课程"], [0, "r", "folder", "思维导图"], [0, "d", "folder2", "数据"],
  [1, "r", "folder", "2010GDP分布"], [1, "r", "folder", "GPS轨迹"], [1, "r", "folder2", "Jiangxi_Data"], [1, "r", "folder", "MZ_street"], [1, "d", "folder2", "Shandong_Data"],
  [2, "", "shp", "地级市.shp"], [2, "", "shp", "山东省各市人口数(2015年).xls"], [2, "", "shpb", "市界.shp"], [2, "", "shp", "省界.shp"],
  [1, "r", "folder", "全国1KM精度的人口数量数据（2000"], [1, "r", "folder", "全国5A级旅游景区数据"], [1, "r", "folder", "全国国家级风景名胜区分布数据"], [1, "r", "folder", "全国土地利用2005&2015"], [1, "r", "folder", "全国地质公园数据"],
];

const icon = (n: string) => html`<q-icon name=${n}></q-icon>`;
const arrow = (dir: string) => html`<i class="tri ${dir}"></i>`;
const menuLabel = (m: string) => { const k = m.match(/^(.*\()(\w)\)$/); return k ? html`<span>${k[1]}<u>${k[2]}</u>)</span>` : html`<span>${m}</span>`; };
const dockTitle = (t: string) => html`<div class="title"><span>${t}</span><b class="db"><svg viewBox="0 0 9 9"><rect x=".5" y=".5" width="8" height="8" rx="1.500"/><path d="M4 2.500h3v3H4zM2.500 4v3h3"/></svg></b><b class="db"><svg viewBox="0 0 9 9"><rect x=".5" y=".5" width="8" height="8" rx="1.500"/><path d="M2.500 2.500l4 4M6.500 2.500l-4 4" class="x"/></svg></b></div>`;

@customElement("app-root")
class AppRoot extends LitElement {
  static styles = css`
    :host{display:block;position:relative;width:1267px;height:662px;overflow:hidden;background:#efefef;color:#111;font:10px/14px "Noto Sans","Noto Sans CJK SC",sans-serif;white-space:nowrap}
    *{box-sizing:border-box}
    .app{display:grid;grid-template-rows:14px 26px 26px 25px 551px 20px;height:662px}
    .menu{display:flex;gap:10.650px;padding-left:6px;color:#999;line-height:14px}
    .bar{display:flex;align-items:center;border-top:1px solid #c3c3c3;background:linear-gradient(#fafafa,#ececec)}
    .bar .first{width:8px}
    .cell{width:21.800px;height:24px;display:grid;place-items:center;flex:none}
    .cell q-icon{width:21px;height:21px}
    .on{background:#dcdcdc;border:1px solid #aaa;border-radius:2px;height:21px}
    .grip{width:11.500px;flex:none;display:grid;place-items:center}
    .grip::after{content:"";width:3px;height:14px;background:radial-gradient(circle,#bbb .6px,transparent .8px) 0 0/2px 2px}
    .sep{width:6px;flex:none;display:grid;place-items:center}
    .sep::after{content:"";width:1px;height:13px;background:#ddd}
    .dd{width:10px;flex:none;display:grid;place-items:center}
    .tri{display:block;flex:none;width:0;height:0;border:3px solid transparent}
    .tri.d{border-top:4px solid #555;border-bottom:0}
    .tri.u{border-bottom:4px solid #555;border-top:0}
    .tri.r{border-left:4px solid #555;border-right:0}
    .tri.l{border-right:4px solid #555;border-left:0}
    .body{display:grid;grid-template-columns:237px 5px 715px 5px 305px;border-top:1px solid #bbb}
    .left,.right{display:flex;flex-direction:column;min-width:0}
    .left>*,.right>*{flex:none}
    .title{display:flex;align-items:center;height:14px;padding:0 1px 0 1.500px;gap:1px}
    .title span{flex:1}
    .db svg{display:block;width:8px;height:8px;fill:#f2f2f2;stroke:#777;stroke-width:.8}
    .tools{display:flex;align-items:center;height:19px;padding:0 0 2px 2.500px;gap:3.600px}
    .tools q-icon{width:13px;height:13px}
    .browser{display:grid;grid-template:259px 11px/225px 12px;border-top:1px solid #c9c9c9;height:271px}
    .list{background:#fff;overflow:hidden}
    .row{display:flex;align-items:center;height:14.550px}
    .row q-icon{width:14px;height:14px;margin-right:3px}
    .row .tw{width:16px;display:flex;padding-left:3px;flex:none}
    .d0{padding-left:18px}.d1{padding-left:34.500px}.d2{padding-left:50.500px}
    .picked{background:#ededed}
    .vs{display:flex;flex-direction:column;align-items:center;background:#e2e2e2;border:1px solid #ccc;border-width:0 1px}
    .vs b{display:grid;place-items:center;width:100%;height:11px;background:#f5f5f5;border-bottom:1px solid #ccc;flex:none}
    .vs s{display:block;width:100%;background:#f8f8f8;border:1px solid #ccc;border-width:1px 0}
    .gap{flex:1}
    .p1{height:60px}.p1b{height:42px}
    .hs{display:flex;align-items:stretch;background:#e2e2e2;border:1px solid #ccc}
    .hs b{display:grid;place-items:center;width:10px;background:#f5f5f5}
    .hs s{width:154px;background:#f8f8f8;border-right:1px solid #bbb}
    .corner{background:#efefef}
    .split{height:5px;display:grid;place-items:center}
    .split::after{content:"";width:11px;border-top:1px dotted #bbb}
    .tools.lt{height:18px;padding:0 0 0 1px;gap:3.600px}
    .lt .hot{display:grid;place-items:center;width:16px;height:16px;background:#dcdcdc;border:1px solid #bbb;border-radius:2px}
    .layers{flex:1;background:#fff;border-top:1px solid #ccc;border-right:1px solid #ccc}
    .lrow{display:flex;align-items:center;height:14px;background:#ededed;padding-left:18px}
    .chk{display:grid;place-items:center;width:10px;height:10px;background:#fff;flex:none}
    .chk svg{width:9px;height:9px;fill:none;stroke:#000;stroke-width:1.700}
    .sw{width:12px;height:12px;background:#6a91b8;border:1px solid #4f779c;flex:none}
    .lrow .sw{margin:0 4px 0 5px}
    .lrow b{text-decoration:underline}
    .mapc{background:#fff;border:1px solid #ccc;border-width:0 1px}
    .mapc svg{display:block;width:713px;height:550px}
    .field{display:flex;align-items:center;background:#fff;border:1px solid #b9b9b9;border-radius:2px}
    .combo{display:flex;align-items:center;background:linear-gradient(#fff,#f0f0f0);border:1px solid #b9b9b9;border-radius:2px;padding:0 7px 0 3px}
    .combo>span,.field>span{flex:1}
    .find{height:14px;width:305px;padding-left:3px;color:#888}
    .find q-icon{width:10px;height:10px;margin-right:5px}
    .proc{display:grid;grid-template-columns:1fr 12px;height:58px;border:1px solid #c0c0c0}
    .proc .row{padding-left:1px}
    .layc{height:17px;width:302px;margin:1px 0 0 1px}
    .layc q-icon,.rend q-icon{width:13px;height:13px;margin-right:3px}
    .rendrow{display:flex;align-items:center;height:17px;margin:6px 0 0 1px}
    .rendrow>q-icon{width:16px;height:16px;margin:2px 6px 0 5px}
    .rend{width:275px;height:17px}
    .style{display:grid;grid-template-columns:25px 278px;margin:3px 0 0 1px;height:379px}
    .side{background:#5d5d5d;display:flex;flex-direction:column;align-items:center;gap:5.200px;padding-top:3px}
    .side q-icon{width:16px;height:16px}
    .side q-icon:first-child{width:19px;height:19px;margin:-2px 0 -1px}
    .main{display:flex;flex-direction:column;padding-left:2px;min-width:0}
    .main>*{flex:none}
    .sym{display:grid;grid-template-columns:71px 151px 53px;height:111px;border-bottom:1px solid #aaa;padding-top:2px}
    .prev{width:41px;height:41px;background:#7d8b8f;border:1px solid #333;margin:31px 0 0 13px}
    .symt{height:104px;border:1px solid #c4c4c4;background:#fff}
    .symt .row{gap:4px}
    .symt .top{background:#efefef;font-weight:700;padding-left:4.500px;gap:3px}
    .symt .sub{padding-left:34px}
    .symt .sw{width:11px;height:11px}
    .symt .top .tri{margin-right:4px}
    .symt .grey{background:#7d8b8f;border-color:#5c686c}
    .btns{display:grid;grid-template-columns:22px 22px;grid-auto-rows:18px;gap:5.300px 4px;padding:2px 0 0 5px}
    .btn{display:grid;place-items:center;background:linear-gradient(#fdfdfd,#f0f0f0);border:1px solid #bbb;border-radius:2px}
    .btn q-icon{width:14px;height:14px}
    .props{display:grid;grid-template-columns:256px 7px 12px;height:222px}
    .form{display:flex;flex-direction:column;min-width:0;padding-top:6px}
    .fr{display:flex;align-items:center;height:15px;font-size:9.600px}
    .fr label{width:40px;flex:none}
    .mono{font-family:"Liberation Mono","Noto Sans CJK SC",monospace;font-size:8.800px}
    .fr .combo{width:216px;height:14px}
    .slide{flex:1;display:flex;align-items:center;height:14px}
    .slide::before{content:"";height:3px;flex:1;border:1px solid #bbb;background:#eee}
    .slide::after{content:"";width:11px;height:11px;background:#fff;border:1px solid #aaa;border-radius:2px;margin-right:3px}
    .spin{width:66px;height:14px;padding-left:2px}
    .field>.ud{flex:none}
    .ud{display:flex;flex-direction:column;gap:2px;padding:0 2px;border-left:1px solid #ccc;height:100%;justify-content:center}
    .ud .tri{border-width:3px}
    .ud .tri.u{border-top-width:0}.ud .tri.d{border-bottom-width:0}
    .colr{display:grid;grid-template-columns:1fr 10px;width:216px;height:15px;border:1px solid #bbb;border-radius:2px;background:#f8f8f8}
    .colr i.c{background:#7d8b8f;border-radius:2px;margin:1px 2px}
    .colr b{border-left:1px solid #bbb;display:grid;place-items:center}
    .rule{height:1px;background:#aaa;margin:46px 0 5px}
    .cf{display:flex;align-items:center;gap:7px;height:16px}
    .cf .field{width:233px;height:15px;padding-left:5px}
    .cf .field q-icon{width:10px;height:10px;margin-right:3px}
    .cf .field .drop{width:18px;height:100%;display:grid;place-items:center;background:#f6f6f6;margin-left:2px}
    .cf>q-icon{width:15px;height:15px}
    .gal{display:grid;grid-template-columns:1fr 11px;height:80px;margin-top:3px;background:#fff;border:1px solid #c0c0c0}
    .gl{display:flex;gap:31px;padding:16px 0 0 17px}
    .gl i{width:56px;height:47px;border:1px solid}
    .blue{background:linear-gradient(#2f6d9f,#48a9f5);border-color:#2f6d9f!important}
    .brown{background:linear-gradient(#4a2614,#b2572a);border-color:#b2572a!important}
    .act{display:flex;align-items:center;height:20px;padding-top:3px}
    .act q-icon{width:14px;height:14px}
    .tog{width:19px;height:17px;display:grid;place-items:center}
    .tog.s{background:#ddd;border:1px solid #aaa;border-radius:2px;border-bottom:0}
    .pb{display:flex;align-items:center;justify-content:center;height:16px;background:linear-gradient(#fefefe,#f0f0f0);border:1px solid #b5b5b5;border-radius:2px}
    .save{width:56px;margin-left:106px}.adv{width:53px;margin-left:4px;gap:9px;padding-left:5px}
    .rs{display:flex;align-items:center;height:25px;gap:8px;padding:4px 0 0 3px;font-weight:700;font-size:10.300px}
    .rs .tri{border-width:4px 0 4px 5px}
    .foot{display:flex;align-items:center;height:20px}
    .foot .btn{width:19px;height:18px;margin-right:4px}
    .foot .chk{border:1px solid #bbb;margin:0 5px 0 109px}
    .apply{width:51px;margin-left:12px;font-size:9px}
    .stat{display:flex;align-items:center;font-size:8.800px;padding-left:1px}
    .stat .field{height:15px}
    .loc{width:162px;padding-left:3px;color:#888;margin-right:515px}
    .loc q-icon{width:10px;height:10px;margin-right:5px}
    .stat>q-icon{width:13px;height:13px}
    .stat .crd{width:72px;margin:0 4px 0 3px;padding-left:4px;font-size:8px}
    .stat .scl{width:67px;height:15px;margin:0 9px 0 2px;padding-left:3px;font-size:8px}
    .mag{width:68px;margin:0 7px 0 2px;padding-left:2px}
    .rot{width:60px;margin-left:6px;padding-left:3px}
    .lk{margin-right:4px}
    .over{position:absolute;left:0;top:0;width:1267px;height:662px;pointer-events:none}
  `;

  bar(src: string) {
    const parts = src.split(" ");
    return html`<div class="bar">${parts.map((p, i) => {
      if (p === "|") return html`<span class=${classMap({ grip: true, first: i === 0 })}></span>`;
      if (p === "/") return html`<span class="sep"></span>`;
      if (p === "v") return html`<span class="dd">${arrow("d")}</span>`;
      const on = p[0] === "*";
      return html`<span class=${classMap({ cell: true, on })}>${icon(on ? p.slice(1) : p)}</span>`;
    })}</div>`;
  }

  left() {
    return html`<div class="left">${dockTitle("浏览")}
      <div class="tools">${["addl", "refresh", "funnel", "collapse", "infoc"].map(icon)}</div>
      <div class="browser">
        <div class="list">${TREE.map(([d, a, ic, t]) => html`<div class="row d${d} ${ic === "shpb" ? "picked" : ""}"><span class="tw">${a ? arrow(a) : nothing}</span>${icon(ic)}<span>${t}</span></div>`)}</div>
        <div class="vs"><b>${arrow("u")}</b><span class="p1"></span><s class="p1b"></s><span class="gap"></span><b>${arrow("d")}</b></div>
        <div class="hs"><b>${arrow("l")}</b><s></s><span class="gap"></span><b>${arrow("r")}</b></div><div class="corner"></div>
      </div>
      <div class="split"></div>
      ${dockTitle("图层")}
      <div class="tools lt"><span class="hot">${icon("brush")}</span>${["addgrp", "eye", "funnel", "eps"].map(icon)}${arrow("d")}${["expand", "collapse", "rem"].map(icon)}</div>
      <div class="layers"><div class="lrow"><span class="chk"><svg viewBox="0 0 10 10"><path d="M1.500 5l2.500 3.500L8.500 1"/></svg></span><i class="sw"></i><b>市界</b></div></div>
    </div>`;
  }

  map() {
    const islets = points(ISLETS);
    return html`<div class="mapc"><svg viewBox="0 0 713 550">
      <path d=${ragged(OUTLINE) + "Z"} fill="#7d8b8f" stroke="#242829" stroke-width="1.100"/>
      ${BORDERS.map((b) => svg`<path d=${ragged(b)} fill="none" stroke="#242829" stroke-width="1.100"/>`)}
      ${islets.map(([x, y], i) => svg`<rect x=${x - 0.7} y=${y - 0.7} width=${1.3 + (i % 3) * 0.5} height=${1.3 + (i % 2) * 0.7} fill="#2b3031"/>`)}
      <circle cx="465.500" cy="357.500" r="2.300" fill="#fff" stroke="#242829" stroke-width=".7"/>
    </svg></div>`;
  }

  right() {
    const spin = html`<span class="ud">${arrow("u")}${arrow("d")}</span>`;
    return html`<div class="right">${dockTitle("处理工具箱")}
      <div class="tools">${["gears", "python", "clock", "doc"].map(icon)}<span></span>${icon("note")}<span></span><span></span>${icon("wrench")}</div>
      <div class="field find">${icon("search")}<span>搜索...</span></div>
      <div class="proc"><div class="list">${[["clock", "最近用过"], ["q", "Interpolation"], ["q", "Layer tools"], ["q", "Raster terrain analysis"]].map(([i, t]) => html`<div class="row"><span class="tw">${arrow("r")}</span>${icon(i)}<span>${t}</span></div>`)}</div>
        <div class="vs"><b>${arrow("u")}</b><s class="gap"></s><span class="gap"></span><b>${arrow("d")}</b></div></div>
      <div class="split"></div>
      ${dockTitle("图层样式")}
      <div class="combo layc">${icon("shpg")}<span>市界</span>${arrow("d")}</div>
      <div class="rendrow">${icon("brush2")}<div class="combo rend">${icon("single")}<span>单一符号</span>${arrow("d")}</div></div>
      <div class="style">
        <div class="side">${["tagy", "abc", "cubes", "tree", "hist"].map(icon)}</div>
        <div class="main">
          <div class="sym"><div class="prev"></div>
            <div class="symt"><div class="row top">${arrow("d")}<i class="sw"></i><span>填充</span></div><div class="row sub"><i class="sw grey"></i><span>简单填充</span></div></div>
            <div class="btns">${["plus", "up", "minus", "down", "dup", "unlock"].map((n) => html`<span class="btn">${icon(n)}</span>`)}</div>
          </div>
          <div class="props">
            <div class="form">
              <div class="fr"><label>单位</label><div class="combo mono"><span>Millimeters</span>${arrow("d")}</div></div>
              <div class="fr"><label>不透明度</label><div class="slide"></div><div class="field spin mono"><span>100.0 %</span>${spin}</div></div>
              <div class="fr"><label>颜色</label><div class="colr"><i class="c"></i><b>${arrow("d")}</b></div></div>
              <div class="rule"></div>
              <div class="cf"><div class="field mono">${icon("search")}<span>Colorful</span>${icon("clear")}<b class="drop">${arrow("d")}</b></div>${icon("swatch")}</div>
              <div class="gal"><div class="gl"><i class="blue"></i><i class="brown"></i></div><div class="vs"><b>${arrow("u")}</b><s class="gap"></s><span class="gap"></span><b>${arrow("d")}</b></div></div>
              <div class="act"><span class="tog s">${icon("grid")}</span><span class="tog">${icon("table")}</span><span class="pb save">保存符号…</span><span class="pb adv">高级 ${arrow("d")}</span></div>
            </div><span></span>
            <div class="vs"><b>${arrow("u")}</b><s class="gap"></s><b>${arrow("d")}</b></div>
          </div>
          <div class="rs">${arrow("r")}<span>图层渲染</span></div>
          <div class="foot"><span class="btn">${icon("undoo")}</span><span class="btn">${icon("redog")}</span><span class="chk"><svg viewBox="0 0 10 10"><path d="M1.500 5l2.500 3.500L8.500 1"/></svg></span><span>实时更新</span><span class="pb apply mono">Apply</span></div>
        </div>
      </div>
    </div>`;
  }

  overlay() {
    return html`<svg class="over" viewBox="0 0 1267 662">
      <rect x="59.500" y="273" width="168.500" height="32" rx="3" fill="none" stroke="#f5261b" stroke-width="2.200"/>
      <path d="M235.500 271.500L289 186.500 286.500 184 297.500 178 296.800 190.500 294 188.500Z" fill="#f5261b"/>
      <g fill="#f5261b" font-size="21.800" font-weight="400"><text x="289" y="137.500" textLength="316" lengthAdjust="spacing">利用连接将excel表和属性表连接</text><text x="289" y="166" textLength="371">前提是两个表有同一个字段名进行匹配</text></g>
      <rect x="1260.500" y="597" width="10" height="39" rx="3" fill="#4a5063"/>
      ${[0, 1, 2, 3, 4, 5, 6, 7, 8].map((i) => svg`<path d="M1263 ${601 + i * 3.7}h4" stroke=${i < 2 ? "#222838" : i < 6 ? "#e2c24a" : "#4fc8a0"} stroke-width="1.800"/>`)}
      <path d="M1112 643h155v19h-155z" fill="#f9fbfe"/><path d="M1112 643.500h155" stroke="#d7dde6"/>
      <rect x="1100" y="642" width="20" height="19" rx="3.500" fill="#f1592a" transform="rotate(-10 1110 651.500)"/>
      <path d="M1116 646.500q-10-1.500-10.500 1.500 0 3 5.500 3.200 5.500.5 5 3.300-1.500 3.500-11.500 1.500" fill="none" stroke="#fff" stroke-width="2.800"/>
      <g fill="none" stroke="#2277cc" stroke-width="1.900">
        <path d="M1127 649.500h10.500v5.500H1127zM1132.200 646v13"/><circle cx="1147.500" cy="651" r="1.500" stroke-width="1.300"/><path d="M1154 654.500q.5 2.500-1.800 4"/>
        <circle cx="1167.500" cy="653" r="5.500" stroke-width="1.600"/><path d="M1164.500 654.500q3 3 6 0M1165.500 650v1.800M1169.500 650v1.800" stroke-width="1.300"/>
        <path d="M1181.500 652.500q.5 4 4.200 4t4.200-4M1185.700 656.500v3" stroke-width="1.500"/><path d="M1185.700 649v3.500" stroke-width="4.200" stroke-linecap="round"/>
      </g>
      <rect x="1197" y="648" width="13" height="10" rx="1" fill="#2277cc"/><path d="M1199 650.500h9M1199 653h9" stroke="#fff" stroke-dasharray="1.400 1"/><path d="M1200.500 655.800h6" stroke="#fff"/>
      <g fill="#b5c3d8"><circle cx="1221" cy="650" r="2.600"/><path d="M1216 659q0-6 5-6 3 0 3.500 2v4z"/><rect x="1223" y="654" width="6" height="5"/></g>
      <path d="M1233 649.500l3.500-2q3 2 6 0l3.500 2-1.500 3.500-1.500-.5v6.500h-7v-6.500l-1.500.5z" fill="#2277cc"/>
      <path d="M1252 647.500h4.700v4.700H1252zM1252 654h4.700v4.700H1252zM1258.500 654h4.700v4.700h-4.700z" fill="#2277cc"/><path d="M1258.800 648.300h4v4h-4z" stroke="#2277cc" stroke-width="1.400" fill="none"/>
    </svg>`;
  }

  render() {
    return html`<div class="app">
      <nav class="menu">${MENU.map(menuLabel)}</nav>
      ${BARS.map((b) => this.bar(b))}
      <div class="body">${this.left()}<span></span>${this.map()}<span></span>${this.right()}</div>
      <footer class="stat"><div class="field loc mono">${icon("search")}<span>键入以定位(Ctrl+K)</span></div>
        <span>坐标</span><div class="field crd mono"><span>28566,4107272</span></div>${icon("extent")}<span>&nbsp;&nbsp;&nbsp;比例尺</span>
        <div class="combo scl mono"><span>1:3273305</span>${arrow("d")}</div><q-icon class="lk" name="lock"></q-icon><span>放大镜</span>
        <div class="field mag mono"><span>100%</span><span class="ud">${arrow("u")}${arrow("d")}</span></div><span>旋转角度</span><div class="field rot mono"><span>0.0°</span></div>
      </footer></div>${this.overlay()}`;
  }
}
